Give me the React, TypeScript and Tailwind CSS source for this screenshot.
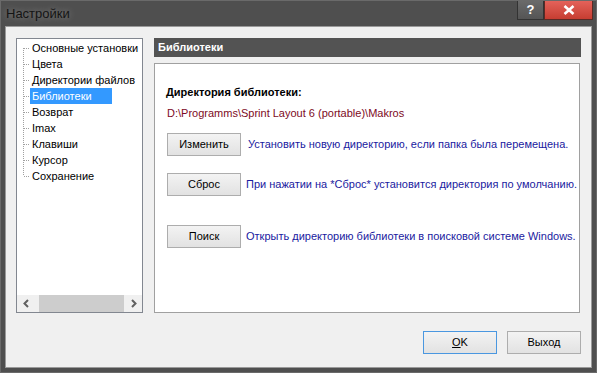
import React from 'react';

const treeItems = [
    'Основные установки',
    'Цвета',
    'Директории файлов',
    'Библиотеки',
    'Возврат',
    'Imax',
    'Клавиши',
    'Курсор',
    'Сохранение',
];

const TreeConnector = ({ first, last }: { first: boolean; last: boolean }) => (
    <svg width="13" height="16" className="shrink-0">
        <line
            x1="6.5"
            y1={first ? 8 : 0}
            x2="6.5"
            y2={last ? 8 : 16}
            stroke="#a0a0a0"
            strokeWidth="1"
            strokeDasharray="1 1"
        />
        <line x1="7" y1="8.5" x2="13" y2="8.5" stroke="#a0a0a0" strokeWidth="1" strokeDasharray="1 1" />
    </svg>
);

const Chevron = ({ dir }: { dir: 'left' | 'right' }) => (
    <svg width="8" height="9" viewBox="0 0 8 9">
        <path
            d={dir === 'left' ? 'M6 1 L2.5 4.5 L6 8' : 'M2 1 L5.5 4.5 L2 8'}
            fill="none"
            stroke="#606060"
            strokeWidth="2"
        />
    </svg>
);

const WinButton = ({ children, className = '' }: { children: React.ReactNode; className?: string }) => (
    <div
        className={`w-[74px] h-[23px] shrink-0 flex items-center justify-center border border-[#adadad] bg-gradient-to-b from-[#f3f3f3] to-[#e2e2e2] text-[11px] text-black ${className}`}
    >
        {children}
    </div>
);

const App = () => {
    return (
        <div className="w-[597px] h-[373px] bg-[#4f4f4f] border border-[#6a6a6a] flex flex-col font-['Liberation_Sans',Arial,sans-serif] overflow-hidden">
            {/* Title bar */}
            <div className="h-[25px] flex items-start shrink-0">
                <div className="pl-[5px] pt-[5px] text-[13px] leading-[16px] text-[#141414] [text-shadow:0_0_6px_rgba(255,255,255,0.35)]">
                    Настройки
                </div>
                <div className="ml-auto mr-[3px] flex -mt-[1px]">
                    <div className="w-[27px] h-[20px] bg-gradient-to-b from-[#6a6a6a] to-[#555555] border border-[#333] flex items-center justify-center text-white font-bold text-[13px]">
                        ?
                    </div>
                    <div className="w-[49px] h-[20px] bg-gradient-to-b from-[#e4625a] to-[#c63d31] border border-[#5a2a25] flex items-center justify-center">
                        <svg width="12" height="10" viewBox="0 0 12 10">
                            <path d="M1.5 1 L10.5 9 M10.5 1 L1.5 9" stroke="#fff" strokeWidth="2.6" />
                        </svg>
                    </div>
                </div>
            </div>

            {/* Client area */}
            <div className="flex-1 mx-[4px] mb-[4px] border border-[#9a9a9a] bg-[#f0f0f0] flex flex-col">
                <div className="flex pl-[10px] pt-[11px] gap-[11px]">
                    {/* Tree */}
                    <div className="w-[127px] h-[275px] border border-[#828790] bg-white flex flex-col">
                        <div className="flex-1 pt-[1px] text-[11px] text-black">
                            {treeItems.map((item, i) => (
                                <div key={item} className="h-[16px] flex items-center">
                                    <TreeConnector first={i === 0} last={i === treeItems.length - 1} />
                                    {i === 3 ? (
                                        <span className="w-[82px] h-[16px] leading-[16px] px-[2px] bg-[#3399ff] text-white whitespace-nowrap">
                                            {item}
                                        </span>
                                    ) : (
                                        <span className="h-[16px] leading-[16px] px-[2px] whitespace-nowrap">{item}</span>
                                    )}
                                </div>
                            ))}
                        </div>
                        {/* Horizontal scrollbar */}
                        <div className="h-[17px] flex bg-[#f0f0f0]">
                            <div className="w-[17px] flex items-center justify-center">
                                <Chevron dir="left" />
                            </div>
                            <div className="flex-1 flex pl-[5px]">
                                <div className="w-[85px] bg-[#cdcdcd]" />
                            </div>
                            <div className="w-[17px] flex items-center justify-center">
                                <Chevron dir="right" />
                            </div>
                        </div>
                    </div>

                    {/* Right panel */}
                    <div className="w-[427px] h-[275px] flex flex-col">
                        <div className="h-[19px] bg-[#535353] text-white font-bold text-[11px] leading-[19px] pl-[4px]">
                            Библиотеки
                        </div>
                        <div className="mt-[6px] w-[426px] flex-1 border border-[#a0a0a0] bg-white flex flex-col text-[11px] overflow-hidden">
                            <div className="mt-[21px] pl-[11px] font-bold text-black leading-[14px]">
                                Директория библиотеки:
                            </div>
                            <div className="mt-[7px] pl-[12px] text-[#7d0a24] leading-[14px]">
                                D:\Programms\Sprint Layout 6 (portable)\Makros
                            </div>
                            <div className="mt-[13px] pl-[12px] flex items-center gap-[7px]">
                                <WinButton>Изменить</WinButton>
                                <span className="text-[#1a1aa0] whitespace-nowrap">
                                    Установить новую директорию, если папка была перемещена.
                                </span>
                            </div>
                            <div className="mt-[17px] pl-[12px] flex items-center gap-[5px]">
                                <WinButton>Сброс</WinButton>
                                <span className="text-[#1a1aa0] whitespace-nowrap">
                                    При нажатии на *Сброс* установится директория по умолчанию.
                                </span>
                            </div>
                            <div className="mt-[29px] pl-[12px] flex items-center gap-[5px]">
                                <WinButton>Поиск</WinButton>
                                <span className="text-[#1a1aa0] whitespace-nowrap">
                                    Открыть директорию библиотеки в поисковой системе Windows.
                                </span>
                            </div>
                        </div>
                    </div>
                </div>

                {/* Bottom buttons */}
                <div className="mt-[18px] flex justify-end gap-[10px] pr-[10px]">
                    <WinButton className="!border-[#4a97e0]">
                        <span>
                            <span className="underline">O</span>K
                        </span>
                    </WinButton>
                    <WinButton>Выход</WinButton>
                </div>
            </div>
        </div>
    );
};

export default App;
